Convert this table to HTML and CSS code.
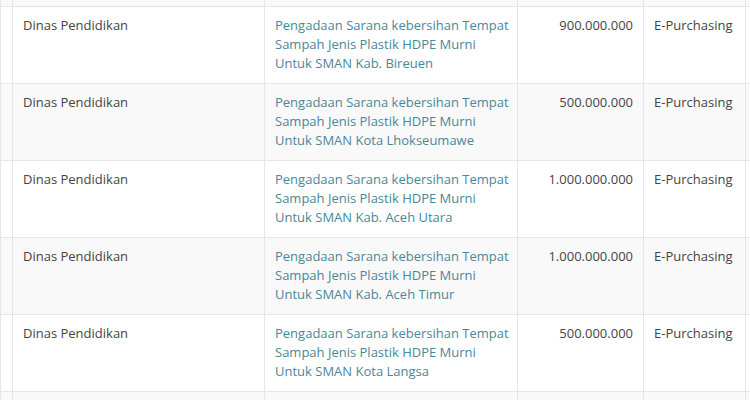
FILE: index.html
```html
<!DOCTYPE html>
<html>
<head>
<meta charset="utf-8">
<link rel="stylesheet" href="styles.css">
</head>
<body>
<table class="grid">
  <colgroup>
    <col class="c0"><col class="c1"><col class="c2"><col class="c3"><col class="c4"><col class="c5">
  </colgroup>
  <tbody>
    <tr class="spacer even"><td></td><td></td><td></td><td></td><td></td><td></td></tr>
    <tr class="odd">
      <td></td><td>Dinas Pendidikan</td>
      <td class="pkg"><a href="#">Pengadaan Sarana kebersihan Tempat Sampah Jenis Plastik HDPE Murni Untuk SMAN Kab. Bireuen</a></td>
      <td class="num">900.000.000</td><td>E-Purchasing</td><td></td>
    </tr>
    <tr class="even">
      <td></td><td>Dinas Pendidikan</td>
      <td class="pkg"><a href="#">Pengadaan Sarana kebersihan Tempat Sampah Jenis Plastik HDPE Murni Untuk SMAN Kota Lhokseumawe</a></td>
      <td class="num">500.000.000</td><td>E-Purchasing</td><td></td>
    </tr>
    <tr class="odd">
      <td></td><td>Dinas Pendidikan</td>
      <td class="pkg"><a href="#">Pengadaan Sarana kebersihan Tempat Sampah Jenis Plastik HDPE Murni Untuk SMAN Kab. Aceh Utara</a></td>
      <td class="num">1.000.000.000</td><td>E-Purchasing</td><td></td>
    </tr>
    <tr class="even">
      <td></td><td>Dinas Pendidikan</td>
      <td class="pkg"><a href="#">Pengadaan Sarana kebersihan Tempat Sampah Jenis Plastik HDPE Murni Untuk SMAN Kab. Aceh Timur</a></td>
      <td class="num">1.000.000.000</td><td>E-Purchasing</td><td></td>
    </tr>
    <tr class="odd">
      <td></td><td>Dinas Pendidikan</td>
      <td class="pkg"><a href="#">Pengadaan Sarana kebersihan Tempat Sampah Jenis Plastik HDPE Murni Untuk SMAN Kota Langsa</a></td>
      <td class="num">500.000.000</td><td>E-Purchasing</td><td></td>
    </tr>
    <tr class="even tail">
      <td></td><td></td><td></td><td></td><td></td><td></td>
    </tr>
  </tbody>
</table>
</body>
</html>
```
FILE: styles.css
```css
html, body {
  margin: 0;
  padding: 0;
  background: #ffffff;
  overflow: hidden;
}
body {
  font-family: "Open Sans", "Noto Sans", sans-serif;
  font-size: 13px;
  color: #444;
}
.grid {
  border-collapse: collapse;
  table-layout: fixed;
  width: 750px;
}
.c0 { width: 12px; }
.c1 { width: 252px; }
.c2 { width: 253px; }
.c3 { width: 126px; }
.c4 { width: 102px; }
.c5 { width: 5px; }
.grid td {
  border: 1px solid #e6e6e6;
  padding: 9px 10px 10px 10px;
  line-height: 19px;
  vertical-align: top;
  overflow: hidden;
}
.grid td.pkg {
  padding-right: 4px;
}
.grid td:first-child,
.grid td:last-child {
  padding: 0;
}
.grid tr.spacer td {
  height: 6px;
  padding: 0;
  border-top: none;
}
.grid tr.tail td {
  height: 40px;
}
.even td { background: #f9f9f9; }
.odd td { background: #ffffff; }
.num { text-align: right; }
.grid a {
  color: #4a8799;
  text-decoration: none;
}
```
